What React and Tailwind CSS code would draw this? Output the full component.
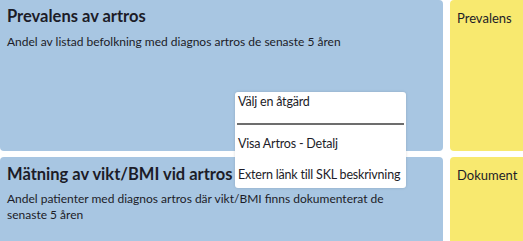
export default function App() {
  const font = { fontFamily: "Lato, 'Noto Sans', sans-serif" };
  return (
    <div className="relative h-[241px] w-[523px] overflow-hidden bg-white text-[#1c1c28]" style={font}>
      <div className="grid h-[290px] grid-cols-[443px_1fr] grid-rows-[151px_1fr] gap-x-[7px] gap-y-[6px]">
        <div className="rounded-r-[4px] rounded-bl-[4px] bg-[#a8c6e2] px-[7px] pt-[6px]">
          <h2 className="text-[16.5px] font-bold leading-[20px]">Prevalens av artros</h2>
          <p className="mt-[8px] text-[12px] leading-[16px]">
            Andel av listad befolkning med diagnos artros de senaste 5 åren
          </p>
        </div>
        <div className="rounded-l-[4px] bg-[#f8e96f] px-[7px] pt-[9px]">
          <p className="text-[13px] leading-[18px]">Prevalens</p>
        </div>
        <div className="rounded-[4px] bg-[#a8c6e2] px-[7px] pt-[7px]">
          <h2 className="text-[16.5px] font-bold leading-[20px]">Mätning av vikt/BMI vid artros</h2>
          <p className="mt-[7px] text-[12px] leading-[16px]">
            Andel patienter med diagnos artros där vikt/BMI finns dokumenterat de
            <br />
            senaste 5 åren
          </p>
        </div>
        <div className="rounded-l-[4px] bg-[#f8e96f] px-[7px] pt-[9px]">
          <p className="text-[13px] leading-[18px]">Dokument</p>
        </div>
      </div>

      {/* action menu */}
      <div className="absolute left-[235px] top-[92px] w-[171px] whitespace-nowrap rounded-[3px] bg-white text-[12.5px] tracking-[-0.2px] shadow-[0_0_3px_rgba(0,0,0,0.15)]">
        <div className="px-[3px] pt-[2px] pb-[13px] leading-[16px]">Välj en åtgärd</div>
        <div className="mx-[2px] h-[2px] bg-[#6d6d6d]" />
        <div className="px-[3px] pt-[11px] leading-[16px]">Visa Artros - Detalj</div>
        <div className="px-[3px] pt-[15px] pb-[5px] leading-[16px]">Extern länk till SKL beskrivning</div>
      </div>
    </div>
  );
}
